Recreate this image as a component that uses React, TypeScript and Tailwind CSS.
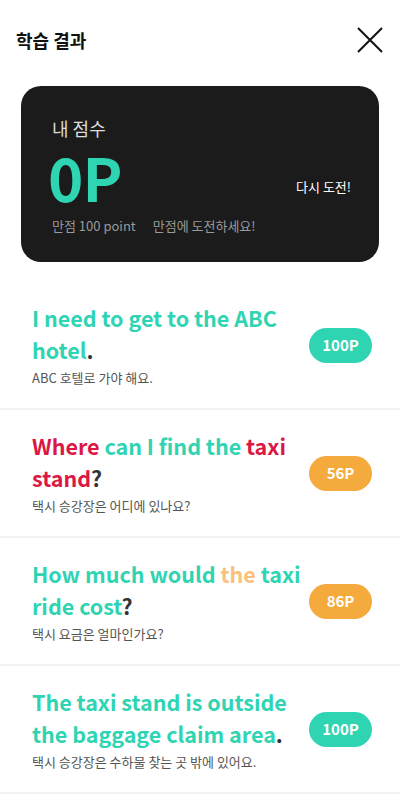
import React from "react";

type Seg = { t: string; c: string };
type Row = { segs: Seg[]; ko: string; score: string; badge: string };

const TEAL = "text-[#2fd4b2]";
const RED = "text-[#dc1744]";
const LORANGE = "text-[#f8c17c]";
const DARK = "text-[#333333]";

const rows: Row[] = [
  {
    segs: [
      { t: "I need to get to the ABC hotel", c: TEAL },
      { t: ".", c: DARK },
    ],
    ko: "ABC 호텔로 가야 해요.",
    score: "100P",
    badge: "bg-[#2fd4b2]",
  },
  {
    segs: [
      { t: "Where ", c: RED },
      { t: "can I find the ", c: TEAL },
      { t: "taxi stand", c: RED },
      { t: "?", c: DARK },
    ],
    ko: "택시 승강장은 어디에 있나요?",
    score: "56P",
    badge: "bg-[#f5aa3e]",
  },
  {
    segs: [
      { t: "How much would ", c: TEAL },
      { t: "the", c: LORANGE },
      { t: " taxi ride cost", c: TEAL },
      { t: "?", c: DARK },
    ],
    ko: "택시 요금은 얼마인가요?",
    score: "86P",
    badge: "bg-[#f5aa3e]",
  },
  {
    segs: [
      { t: "The taxi stand is outside the baggage claim area", c: TEAL },
      { t: ".", c: DARK },
    ],
    ko: "택시 승강장은 수하물 찾는 곳 밖에 있어요.",
    score: "100P",
    badge: "bg-[#2fd4b2]",
  },
];

export default function App() {
  return (
    <div
      className="w-[400px] min-h-[801px] bg-white"
      style={{ fontFamily: '"Noto Sans CJK KR", "Noto Sans", sans-serif' }}
    >
      <div className="flex items-center justify-between pl-4 pr-[17px] h-[80px]">
        <div className="text-[18px] font-bold text-[#111111] leading-none">학습 결과</div>
        <svg width="26" height="26" viewBox="0 0 26 26">
          <path d="M1 1 L25 25 M25 1 L1 25" stroke="#111111" strokeWidth="2" />
        </svg>
      </div>

      <div className="mx-[21px] mt-[6px] h-[176px] rounded-[20px] bg-[#1b1b1b] pl-[31px] pr-[28px] pt-[30px] flex flex-col">
        <div className="text-[18px] leading-[24px] text-[#dcdcdc]">내 점수</div>
        <div className="flex items-center justify-between mt-[6px]">
          <div className="-ml-[4px] text-[60px] leading-[60px] font-bold text-[#2fd4b2] tracking-[-1px]">0P</div>
          <div className="text-[13px] text-white mt-[22px]">다시 도전!</div>
        </div>
        <div className="flex gap-[17px] text-[13px] text-[#9a9a9a] mt-[10px]">
          <span>만점 100 point</span>
          <span>만점에 도전하세요!</span>
        </div>
      </div>

      <div className="mt-[20px]">
        {rows.map((r, i) => (
          <div
            key={i}
            className="flex items-center pl-[32px] pr-[28px] pt-[20px] pb-[20px] border-b-2 border-[#f1f1f1]"
          >
            <div className="flex-1 min-w-0">
              <div className="text-[21.5px] leading-[31.5px] font-bold">
                {r.segs.map((s, j) => (
                  <span key={j} className={s.c}>
                    {s.t}
                  </span>
                ))}
              </div>
              <div className="mt-[3px] text-[13px] leading-[20px] text-[#555555]">{r.ko}</div>
            </div>
            <div
              className={`ml-[4px] shrink-0 w-[63px] h-[35px] rounded-full ${r.badge} flex items-center justify-center text-white text-[15px] font-bold`}
            >
              {r.score}
            </div>
          </div>
        ))}
      </div>
    </div>
  );
}
